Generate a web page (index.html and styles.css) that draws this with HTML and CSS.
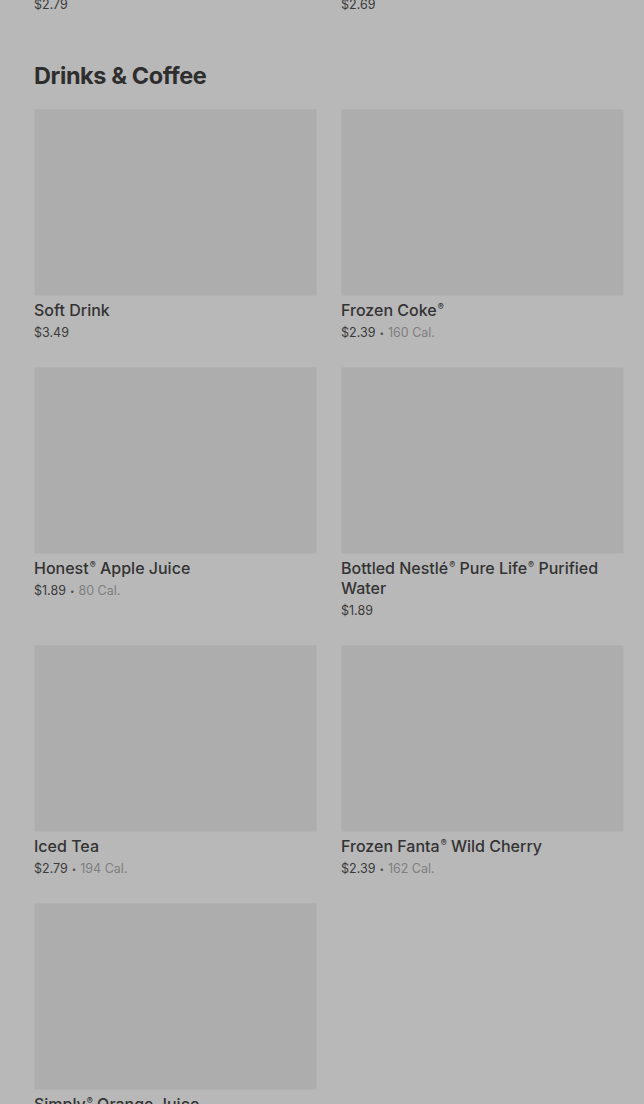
FILE: index.html
```html
<!DOCTYPE html>
<html lang="en">
<head>
  <meta charset="UTF-8" />
  <title>Menu</title>
  <link rel="stylesheet" href="styles.css">
</head>
<body>
  <div class="page">
    <!-- end of previous section -->
    <div class="prev-row">
      <div class="price">$2.79</div>
      <div class="price">$2.69</div>
    </div>

    <h2 class="section-title">Drinks &amp; Coffee</h2>

    <div class="grid">
      <div class="item">
        <div class="thumb"></div>
        <div class="name">Soft Drink</div>
        <div class="price">$3.49</div>
      </div>
      <div class="item">
        <div class="thumb"></div>
        <div class="name">Frozen Coke<sup class="reg">®</sup></div>
        <div class="price">$2.39 <span class="dot">•</span> <span class="cal">160 Cal.</span></div>
      </div>
      <div class="item">
        <div class="thumb"></div>
        <div class="name">Honest<sup class="reg">®</sup> Apple Juice</div>
        <div class="price">$1.89 <span class="dot">•</span> <span class="cal">80 Cal.</span></div>
      </div>
      <div class="item">
        <div class="thumb"></div>
        <div class="name">Bottled Nestlé<sup class="reg">®</sup> Pure Life<sup class="reg">®</sup> Purified Water</div>
        <div class="price">$1.89</div>
      </div>
      <div class="item">
        <div class="thumb"></div>
        <div class="name">Iced Tea</div>
        <div class="price">$2.79 <span class="dot">•</span> <span class="cal">194 Cal.</span></div>
      </div>
      <div class="item">
        <div class="thumb"></div>
        <div class="name">Frozen Fanta<sup class="reg">®</sup> Wild Cherry</div>
        <div class="price">$2.39 <span class="dot">•</span> <span class="cal">162 Cal.</span></div>
      </div>
      <div class="item">
        <div class="thumb"></div>
        <div class="name">Simply<sup class="reg">®</sup> Orange Juice</div>
        <div class="price">$3.19</div>
      </div>
    </div>
  </div>
</body>
</html>
```

FILE: styles.css
```css
body {
  margin: 0;
  background: #b8b8b8;
  color: #303030;
  font-family: Inter, "Noto Sans", sans-serif;
  overflow: hidden;
}

.page {
  padding: 0 20px 0 34px;
}

.prev-row {
  display: grid;
  grid-template-columns: 1fr 1fr;
  column-gap: 24px;
  margin-top: -5px;
}

.section-title {
  margin: 45px 0 17px;
  font-size: 23.5px;
  line-height: 32px;
  font-weight: 700;
  letter-spacing: -0.4px;
  color: #2e2e2e;
}

.grid {
  display: grid;
  grid-template-columns: 1fr 1fr;
  column-gap: 24px;
  row-gap: 24px;
  align-items: start;
}

.thumb {
  height: 185px;
  background: #adadad;
  border: 1px solid #b2b2b2;
  border-radius: 2px;
}

.name {
  margin-top: 4px;
  font-size: 16px;
  line-height: 20px;
  font-weight: 500;
  color: #333;
}

.reg {
  font-size: 9px;
  line-height: 1;
  vertical-align: super;
  padding-left: 1px;
}

.price {
  display: flex;
  align-items: center;
  gap: 4px;
  height: 20px;
  margin-top: 3px;
  font-size: 12.5px;
  line-height: 20px;
  color: #3a3a3a;
}

.prev-row .price {
  margin-top: 0;
}

.dot {
  font-size: 8px;
  color: #555;
}

.cal {
  color: #7e7e7e;
}
```
